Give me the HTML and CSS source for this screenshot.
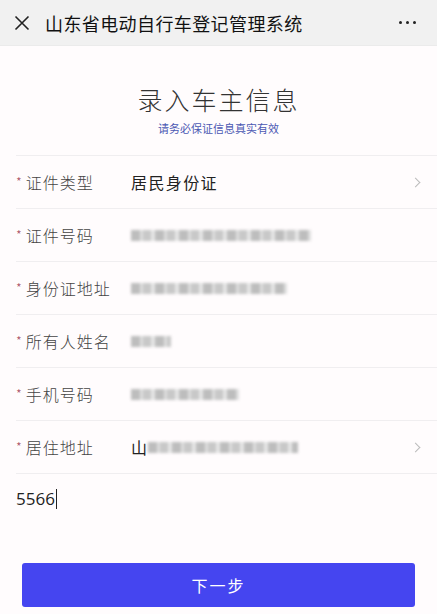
FILE: index.html
```html
<!DOCTYPE html>
<html lang="zh-CN">

<head>
  <meta charset="UTF-8">
  <meta name="viewport" content="width=device-width, initial-scale=1.0">
  <title>录入车主信息</title>
  <link rel="stylesheet" href="styles.css">
</head>

<body>
  <!-- 顶部导航 -->
  <div class="nav-bar">
    <svg class="nav-close" width="16" height="16" viewBox="0 0 16 16">
      <path d="M1.5 1.5 L14.5 14.5 M14.5 1.5 L1.5 14.5" stroke="#222" stroke-width="1.6" fill="none" />
    </svg>
    <div class="nav-title">山东省电动自行车登记管理系统</div>
    <div class="nav-more"><i></i><i></i><i></i></div>
  </div>

  <!-- 标题 -->
  <div class="page-head">
    <div class="page-title">录入车主信息</div>
    <div class="page-tip">请务必保证信息真实有效</div>
  </div>

  <!-- 表单 -->
  <div class="form">
    <div class="form-row">
      <div class="label"><span class="star">*</span>证件类型</div>
      <div class="value">居民身份证</div>
      <span class="arrow"></span>
    </div>
    <div class="form-row">
      <div class="label"><span class="star">*</span>证件号码</div>
      <div class="value"><span class="blur" style="width: 180px"></span></div>
    </div>
    <div class="form-row">
      <div class="label"><span class="star">*</span>身份证地址</div>
      <div class="value"><span class="blur" style="width: 156px"></span></div>
    </div>
    <div class="form-row">
      <div class="label"><span class="star">*</span>所有人姓名</div>
      <div class="value"><span class="blur" style="width: 40px"></span></div>
    </div>
    <div class="form-row">
      <div class="label"><span class="star">*</span>手机号码</div>
      <div class="value"><span class="blur" style="width: 108px"></span></div>
    </div>
    <div class="form-row">
      <div class="label"><span class="star">*</span>居住地址</div>
      <div class="value">山<span class="blur" style="width: 150px"></span></div>
      <span class="arrow"></span>
    </div>
    <div class="form-input">5566<span class="caret"></span></div>
  </div>

  <div class="btn-next">下一步</div>
</body>

</html>
```

FILE: styles.css
```css
body,
html {
  margin: 0;
  width: 100%;
  height: 100%;
}

body {
  background: #fffcfd;
  font-family: "Noto Sans CJK SC", "Noto Sans", sans-serif;
  color: #222;
  overflow: hidden;
}

/* 顶部导航 */
.nav-bar {
  height: 46px;
  background: #f1f1f1;
  display: flex;
  align-items: center;
  padding: 0 14px;
  border-bottom: 1px solid #ebebeb;
  box-sizing: border-box;
}

.nav-close {
  flex: none;
}

.nav-title {
  flex: 1;
  margin-left: 15px;
  font-size: 18px;
  color: #111;
  letter-spacing: 0.4px;
}

.nav-more {
  display: flex;
  gap: 4px;
  margin-right: 7px;
}

.nav-more i {
  width: 3px;
  height: 3px;
  border-radius: 50%;
  background: #222;
}

/* 标题 */
.page-head {
  text-align: center;
  padding-top: 37px;
  height: 110px;
  box-sizing: border-box;
  border-bottom: 1px solid #f0eef0;
  margin-left: 16px;
  padding-right: 16px;
}

.page-title {
  font-size: 25px;
  line-height: 32px;
  font-weight: 300;
  color: #333;
  letter-spacing: 2px;
}

.page-tip {
  margin-top: 5px;
  font-size: 11px;
  line-height: 16px;
  color: #4b58b3;
}

/* 表单 */
.form {
  margin-left: 16px;
}

.form-row {
  height: 53px;
  display: flex;
  align-items: center;
  border-bottom: 1px solid #f0eef0;
  box-sizing: border-box;
  padding-right: 18px;
}

.label {
  width: 115px;
  font-size: 16px;
  font-weight: 300;
  color: #444;
  letter-spacing: 1px;
}

.star {
  color: #a5485a;
  font-size: 13px;
  margin-right: 3px;
  position: relative;
  top: -2px;
}

.value {
  flex: 1;
  font-size: 16px;
  color: #222;
  letter-spacing: 1.4px;
  display: flex;
  align-items: center;
}

.blur {
  display: inline-block;
  height: 11px;
  background: repeating-linear-gradient(90deg, #bdbdbd 0 9px, #dedede 9px 12px, #c8c8c8 12px 20px, #e6e6e6 20px 24px);
  filter: blur(1.5px);
}

.arrow {
  width: 6px;
  height: 6px;
  border-top: 1.5px solid #bbb;
  border-right: 1.5px solid #bbb;
  transform: rotate(45deg);
}

.form-input {
  padding-top: 14px;
  font-size: 17px;
  line-height: 22px;
  color: #222;
  font-family: "Open Sans", "Noto Sans", sans-serif;
  display: flex;
  align-items: flex-start;
  height: 89px;
  box-sizing: border-box;
}

.caret {
  display: inline-block;
  width: 1px;
  height: 20px;
  background: #222;
  margin: 1px 0 0 1px;
}

.btn-next {
  margin: 0 22px;
  height: 44px;
  border-radius: 3px;
  background: #4545f0;
  color: #fff;
  font-size: 16px;
  letter-spacing: 2px;
  display: flex;
  align-items: center;
  justify-content: center;
}
```
